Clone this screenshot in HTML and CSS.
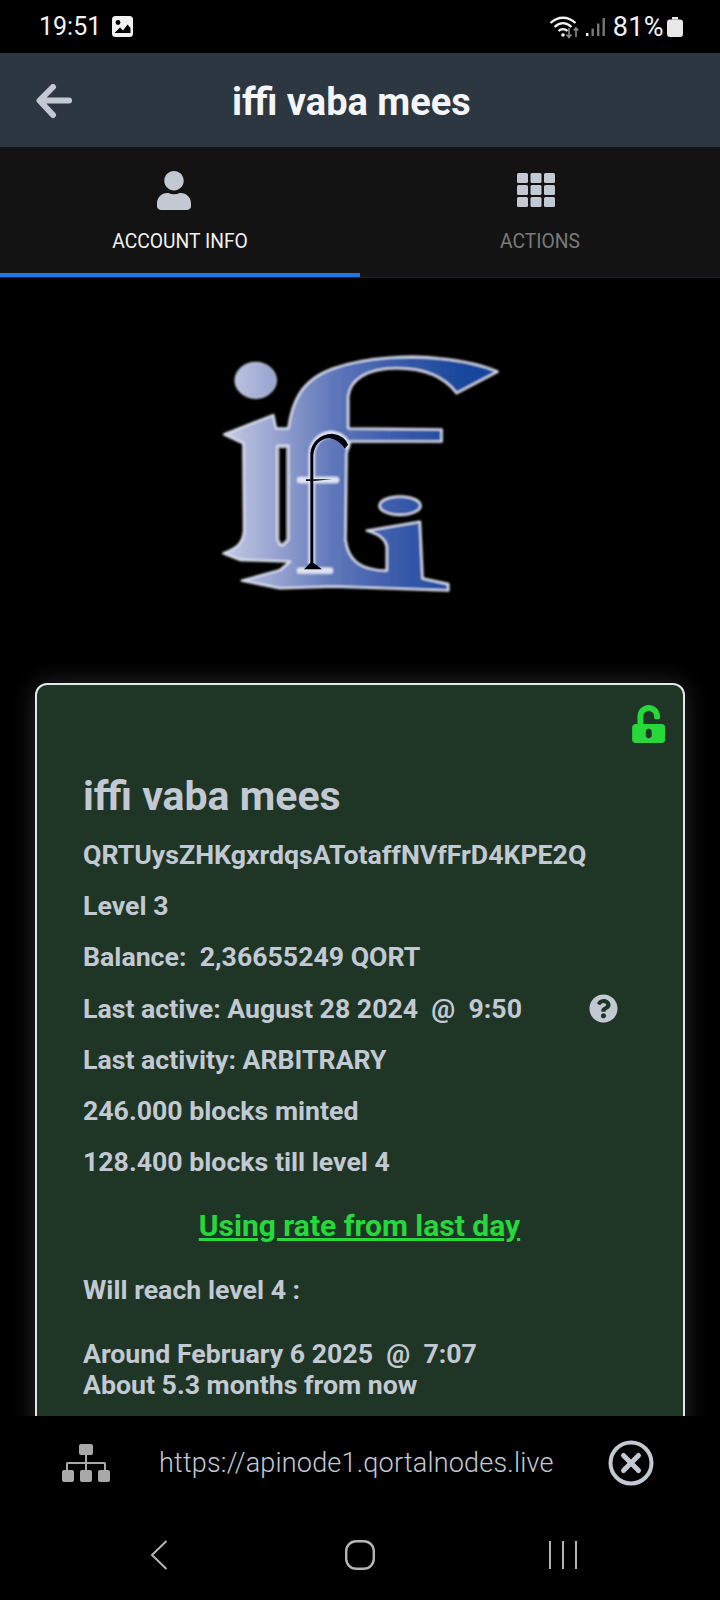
FILE: index.html
```html
<!DOCTYPE html>
<html lang="en">
<head>
<meta charset="utf-8">
<title>iffi vaba mees</title>
<link rel="stylesheet" href="styles.css">
</head>
<body>
<div class="screen">
  <div class="status">
    <div class="status-left">
      <span class="clock">19:51</span>
      <svg class="pic-icon" viewBox="0 0 21 21"><rect width="21" height="21" rx="3.5" fill="#f2f2f2"/><circle cx="6" cy="6.5" r="2.4" fill="#000"/><path d="M2.5 17 8 11.5l3 3 4.5-6 3 3.5V17z" fill="#000"/></svg>
    </div>
    <div class="status-right">
      <svg class="wifi-icon" viewBox="0 0 32 24" fill="none"><path d="M1.5 8C9 1 19 1 26.500 8M5.500 12C11 7 17 7 22.500 12M9.500 16C12 13.500 16 13.500 18.500 16" stroke="#f2f2f2" stroke-width="2.300"/><circle cx="14" cy="20" r="1.800" fill="#f2f2f2"/><path d="M20 13v9M17.500 19.500 20 22.500l2.500-3" stroke="#8a8a8a" stroke-width="1.600"/><path d="M27 22v-9M24.800 15.500 27 13l2.200 2.500" stroke="#8a8a8a" stroke-width="1.600"/></svg>
      <svg class="signal-icon" viewBox="0 0 19 18"><rect x="0" y="15" width="2.400" height="3" fill="#f2f2f2"/><rect x="5.500" y="10.500" width="2.400" height="7.500" fill="#777"/><rect x="11" y="5.500" width="2.400" height="12.500" fill="#777"/><rect x="16.500" y="0" width="2.400" height="18" fill="#777"/></svg>
      <span class="battery-text">81%</span>
      <svg class="battery-icon" viewBox="0 0 16 20"><path d="M5 0h6v2.500H5z" fill="#e8e8e8"/><rect y="2.500" width="16" height="17.500" rx="3" fill="#e8e8e8"/></svg>
    </div>
  </div>

  <header class="topbar">
    <svg class="back-icon" viewBox="0 0 36 36" fill="none"><path d="M33 16.500H6M17 3 3.500 16.500 17 31" stroke="#c3c9d3" stroke-width="6" stroke-linecap="round" stroke-linejoin="round"/></svg>
    <h1 class="topbar-title">iffi vaba mees</h1>
  </header>

  <nav class="tabs">
    <div class="tab tab-active">
      <svg class="tab-user" viewBox="0 0 448 512"><path fill="#c3c9d3" d="M224 256c70.700 0 128-57.300 128-128S294.700 0 224 0 96 57.300 96 128s57.300 128 128 128zm89.600 32h-16.700c-22.200 10.200-46.900 16-72.900 16s-50.600-5.800-72.900-16h-16.700C60.200 288 0 348.200 0 422.400V464c0 26.500 21.500 48 48 48h352c26.500 0 48-21.500 48-48v-41.600c0-74.200-60.200-134.400-134.400-134.400z"/></svg>
      <span class="tab-label">ACCOUNT INFO</span>
    </div>
    <div class="tab">
      <svg class="tab-grid" viewBox="0 0 38 34" fill="#c3c9d3">
        <rect width="11" height="10" rx="1.500"/><rect x="13.500" width="11" height="10" rx="1.500"/><rect x="27" width="11" height="10" rx="1.500"/>
        <rect y="12" width="11" height="10" rx="1.500"/><rect x="13.500" y="12" width="11" height="10" rx="1.500"/><rect x="27" y="12" width="11" height="10" rx="1.500"/>
        <rect y="24" width="11" height="10" rx="1.500"/><rect x="13.500" y="24" width="11" height="10" rx="1.500"/><rect x="27" y="24" width="11" height="10" rx="1.500"/>
      </svg>
      <span class="tab-label">ACTIONS</span>
    </div>
  </nav>

  <main class="content">
    <svg class="logo" viewBox="0 0 960 810">
      <defs>
        <linearGradient id="logoFill" gradientUnits="userSpaceOnUse" x1="72" y1="0" x2="800" y2="0">
          <stop offset="0" stop-color="#c4cae4"/>
          <stop offset="0.25" stop-color="#8f9ccd"/>
          <stop offset="0.45" stop-color="#5f77ba"/>
          <stop offset="0.7" stop-color="#3d5cab"/>
          <stop offset="1" stop-color="#16479c"/>
        </linearGradient>
        <filter id="soft"><feGaussianBlur stdDeviation="2.500"/></filter>
        <filter id="softer"><feGaussianBlur stdDeviation="1"/></filter>
      </defs>
      <g filter="url(#soft)" stroke="#dfe3f2" stroke-width="7" stroke-linejoin="round">
        <ellipse cx="167" cy="121" rx="62" ry="54" fill="url(#logoFill)" stroke-width="3"/>
        <ellipse cx="600" cy="497" rx="62" ry="28" fill="url(#logoFill)"/>
        <path fill="url(#logoFill)" d="M72 283 220 225 228 265H265C275 190 300 120 400 85 500 50 640 45 720 55 790 62 850 75 893 95L770 160C740 120 690 85 590 85 500 85 450 120 445 170V265L725 268V305H450L440 340 437 600C445 660 480 690 560 692V620C555 595 530 580 500 572L660 545 668 715 745 732V752L400 740 240 745 125 722 240 690 270 665 120 660 70 640C110 625 130 610 132 570L130 310Z"/>
        <path fill="#000" d="M232 318H265V600L250 615H240L232 600Z"/>
        <path fill="none" stroke-width="19" stroke-linecap="round" d="M300 420H408M300 692H390M335 680V345C335 310 360 285 392 282 420 284 438 300 442 318"/>
      </g>
      <g filter="url(#softer)" fill="#04040c">
        <path d="M331 668V340C333 308 360 282 395 281 422 283 440 298 444 315L434 326C426 312 410 298 388 294 358 296 343 318 340 345V668L366 688H312Z"/>
        <path d="M318 418H332V423H318ZM340 418H396L340 423Z"/>
      </g>
    </svg>

    <section class="card">
      <svg class="lock" viewBox="0 0 448 512"><path fill="#26d83a" d="M400 256H152V152.900c0-39.600 31.700-72.500 71.300-72.900 40-.4 72.700 32.100 72.700 72v16c0 13.300 10.700 24 24 24h32c13.300 0 24-10.700 24-24v-16C376 68 307.500-.3 223.500 0 139.500.3 72 69.500 72 153.500V256H48c-26.500 0-48 21.500-48 48v160c0 26.500 21.500 48 48 48h352c26.500 0 48-21.500 48-48V304c0-26.500-21.500-48-48-48zM264 408c0 22.100-17.900 40-40 40s-40-17.900-40-40v-48c0-22.100 17.900-40 40-40s40 17.900 40 40v48z"/></svg>
      <h2 class="card-title">iffi vaba mees</h2>
      <div class="info-list">
        <p class="info">QRTUysZHKgxrdqsATotaffNVfFrD4KPE2Q</p>
        <p class="info">Level 3</p>
        <p class="info">Balance:&nbsp; 2,36655249 QORT</p>
        <div class="info info-row">
          <span>Last active: August 28 2024 &nbsp;@&nbsp; 9:50</span>
          <svg class="help" viewBox="0 0 512 512"><path fill="#c3c9d3" d="M504 256c0 136.997-111.043 248-248 248S8 392.997 8 256C8 119.083 119.043 8 256 8s248 111.083 248 248zM262.655 90c-54.497 0-89.255 22.957-116.549 63.758-3.536 5.286-2.353 12.415 2.715 16.258l34.699 26.310c5.205 3.947 12.621 3.008 16.665-2.122 17.864-22.658 30.113-35.797 57.303-35.797 20.429 0 45.698 13.148 45.698 32.958 0 14.976-12.363 22.667-32.534 33.976C247.128 238.528 216 254.941 216 296v4c0 6.627 5.373 12 12 12h56c6.627 0 12-5.373 12-12v-1.333c0-28.462 83.186-29.647 83.186-106.667 0-58.002-60.165-102-116.531-102zM256 338c-25.365 0-46 20.635-46 46 0 25.364 20.635 46 46 46s46-20.636 46-46c0-25.365-20.635-46-46-46z"/></svg>
        </div>
        <p class="info">Last activity: ARBITRARY</p>
        <p class="info">246.000 blocks minted</p>
        <p class="info">128.400 blocks till level 4</p>
      </div>
      <p class="rate">Using rate from last day</p>
      <p class="info reach">Will reach level 4 :</p>
      <p class="info forecast">Around February 6 2025 &nbsp;@&nbsp; 7:07<br>About 5.3 months from now</p>
    </section>
  </main>

  <footer class="bottom">
    <div class="node-row">
      <svg class="node-icon" viewBox="0 0 48 38" fill="#a9a9a9">
        <rect x="17" width="14" height="11" rx="2"/>
        <rect y="26" width="12" height="12" rx="2"/><rect x="18" y="26" width="12" height="12" rx="2"/><rect x="36" y="26" width="12" height="12" rx="2"/>
        <path d="M23 11h2v7h17.500a1.500 1.500 0 0 1 1.500 1.500V26h-2v-6H25v6h-2v-6H6v6H4v-6.500A1.500 1.500 0 0 1 5.500 18H23z"/>
      </svg>
      <span class="node-url">https://apinode1.qortalnodes.live</span>
      <svg class="close-icon" viewBox="0 0 46 46" fill="none"><circle cx="23" cy="23" r="20.500" stroke="#c3c9d3" stroke-width="4"/><path d="M15.500 15.500l15 15M30.500 15.500l-15 15" stroke="#c3c9d3" stroke-width="5" stroke-linecap="round"/></svg>
    </div>
    <div class="nav-row">
      <svg class="nav-back" viewBox="0 0 18 30" fill="none"><path d="M16.500 1 2 15l14.500 14" stroke="#b5b5b5" stroke-width="2"/></svg>
      <svg class="nav-home" viewBox="0 0 30 30" fill="none"><rect x="1.200" y="1.200" width="27.600" height="27.600" rx="10" stroke="#b5b5b5" stroke-width="2.400"/></svg>
      <svg class="nav-recent" viewBox="0 0 28 28" fill="none"><path d="M1 0v28M14 0v28M27 0v28" stroke="#b5b5b5" stroke-width="2"/></svg>
    </div>
  </footer>
</div>
</body>
</html>
```

FILE: styles.css
```css
* { box-sizing: border-box; }
html, body { margin: 0; padding: 0; background: #000; }
body { font-family: Roboto, "Liberation Sans", sans-serif; color: #c3c9d3; }
p, h1, h2 { margin: 0; }
svg { display: block; flex: none; }

.screen {
  width: 720px;
  height: 1600px;
  display: flex;
  flex-direction: column;
  overflow: hidden;
  background: #000;
}

/* status bar */
.status {
  height: 53px;
  flex: none;
  display: flex;
  justify-content: space-between;
  align-items: center;
  padding: 0 37px 0 39px;
  color: #f2f2f2;
}
.status-left, .status-right { display: flex; align-items: center; }
.clock { font-size: 25px; line-height: 30px; margin-right: 11px; }
.pic-icon { width: 21px; height: 21px; }
.wifi-icon { width: 32px; height: 24px; margin-right: 5px; }
.signal-icon { width: 19px; height: 18px; margin-right: 8px; }
.battery-text { font-size: 27px; line-height: 30px; letter-spacing: 0.4px; margin-right: 3px; }
.battery-icon { width: 16px; height: 20px; }

/* top bar */
.topbar {
  height: 94px;
  flex: none;
  display: flex;
  align-items: center;
  padding: 0 0 0 36px;
  background: #2d3742;
}
.back-icon { width: 36px; height: 36px; margin-top: 4px; }
.topbar-title {
  margin-left: 160px;
  margin-top: 4px;
  font-size: 38px;
  line-height: 42px;
  font-weight: 700;
  color: #f4f5f6;
}

/* tabs */
.tabs {
  height: 131px;
  flex: none;
  display: grid;
  grid-template-columns: 1fr 1fr;
  background: #131313;
  border-bottom: 1px solid #1d2328;
}
.tab {
  height: 130px;
  display: flex;
  flex-direction: column;
  align-items: center;
  justify-content: flex-start;
  padding-top: 24px;
  color: #7a7a7a;
}
.tab-active {
  color: #f0f0f0;
  border-bottom: 4px solid #1c7ae6;
}
.tab-user { width: 34px; height: 39px; margin-left: -12px; }
.tab-grid { width: 38px; height: 34px; margin: 2px 0 3px -8px; }
.tab-label { margin-top: 21px; font-size: 19.300px; line-height: 22px; }

/* main */
.content {
  flex: 1;
  min-height: 0;
  overflow: hidden;
  padding-top: 62px;
}
.logo { width: 320px; height: 270px; margin: 0 auto 73px; }
.card {
  position: relative;
  width: 650px;
  margin-left: 35px;
  padding: 89px 47px 60px 46px;
  background: #1f3627;
  border: 2px solid #e4e6e8;
  border-radius: 12px;
  box-shadow: 0 0 24px rgba(255, 255, 255, 0.16);
}
.lock { position: absolute; top: 20px; right: 18px; width: 33.500px; height: 38px; }
.card-title { font-size: 41px; line-height: 44px; font-weight: 700; }
.info-list { display: flex; flex-direction: column; gap: 23px; margin-top: 23px; }
.info { font-size: 26.700px; line-height: 28px; font-weight: 700; }
.info-row { display: flex; align-items: center; gap: 67px; }
.help { width: 29px; height: 29px; }
.rate {
  margin-top: 34px;
  text-align: center;
  font-size: 30px;
  line-height: 32px;
  font-weight: 700;
  color: #26d83a;
  text-decoration: underline;
}
.reach { margin-top: 34px; }
.forecast { margin-top: 35px; line-height: 31px; }

/* bottom */
.bottom { height: 184px; flex: none; background: #000; }
.node-row {
  height: 94px;
  display: flex;
  align-items: center;
  padding: 0 0 0 62px;
}
.node-icon { width: 48px; height: 38px; }
.node-url { margin-left: 49px; font-size: 27px; line-height: 30px; font-weight: 300; color: #c3c9d3; letter-spacing: 0.2px; }
.close-icon { width: 46px; height: 46px; margin-left: 54px; }
.nav-row {
  height: 90px;
  display: grid;
  grid-template-columns: 195px 204px 28px;
  align-items: start;
  padding: 30px 0 0 150px;
}
.nav-back { width: 18px; height: 30px; }
.nav-home { width: 30px; height: 30px; }
.nav-recent { width: 28px; height: 28px; margin-top: 1px; }
```
